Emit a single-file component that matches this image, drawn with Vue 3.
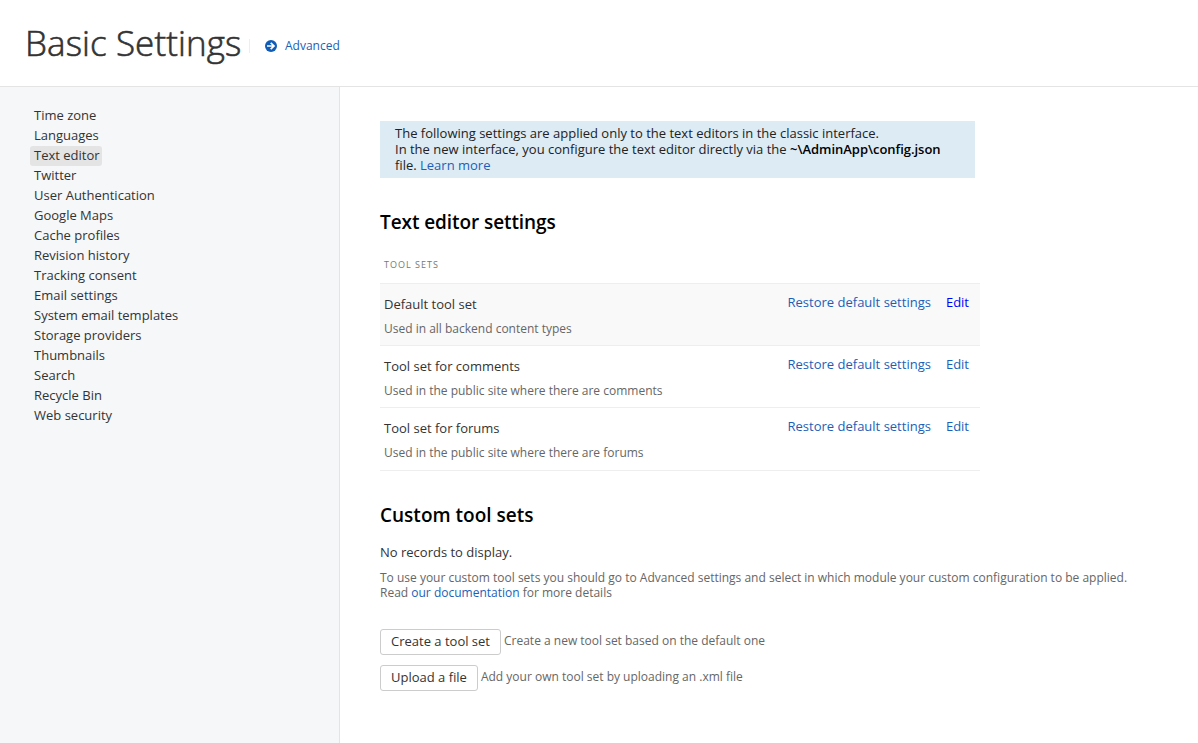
<script setup>
const nav = ['Time zone', 'Languages', 'Text editor', 'Twitter', 'User Authentication', 'Google Maps', 'Cache profiles', 'Revision history', 'Tracking consent', 'Email settings', 'System email templates', 'Storage providers', 'Thumbnails', 'Search', 'Recycle Bin', 'Web security']
const sets = [
  { name: 'Default tool set', note: 'Used in all backend content types', hot: true },
  { name: 'Tool set for comments', note: 'Used in the public site where there are comments' },
  { name: 'Tool set for forums', note: 'Used in the public site where there are forums' },
]
</script>

<template>
  <div class="page">
    <header class="head">
      <h1>Basic Settings</h1>
      <a class="adv">
        <svg width="12" height="12" viewBox="0 0 12 12"><circle cx="6" cy="6" r="6" fill="#105cb6" /><path d="M2 6H9M5.7 2.8L9 6L5.7 9.2" fill="none" stroke="#fff" stroke-width="1.7" /></svg>
        <span>Advanced</span>
      </a>
    </header>
    <div class="body">
      <nav class="side">
        <a v-for="n in nav" :key="n" :class="{ on: n === 'Text editor' }">{{ n }}</a>
      </nav>
      <main class="main">
        <div class="info">
          The following settings are applied only to the text editors in the classic interface.<br />
          In the new interface, you configure the text editor directly via the <b>~\AdminApp\config.json</b><br />
          file. <a>Learn more</a>
        </div>
        <h2>Text editor settings</h2>
        <div class="th">TOOL SETS</div>
        <div class="sets">
          <div v-for="s in sets" :key="s.name" class="row" :class="{ hot: s.hot }">
            <div class="desc"><div class="name">{{ s.name }}</div><div class="note">{{ s.note }}</div></div>
            <a class="restore">Restore default settings</a>
            <a class="edit">Edit</a>
          </div>
        </div>
        <h2 class="custom">Custom tool sets</h2>
        <p class="none">No records to display.</p>
        <p class="help">To use your custom tool sets you should go to Advanced settings and select in which module your custom configuration to be applied.<br />Read <a>our documentation</a> for more details</p>
        <div class="act"><button>Create a tool set</button><span>Create a new tool set based on the default one</span></div>
        <div class="act"><button>Upload a file</button><span>Add your own tool set by uploading an .xml file</span></div>
      </main>
    </div>
  </div>
</template>

<style>
body { margin: 0; background: #fff; }
</style>
<style scoped>
.page { height: 743px; overflow: hidden; display: flex; flex-direction: column; font: 13px/16px "Open Sans", sans-serif; color: #333; box-sizing: border-box; }
.page * { box-sizing: border-box; }
.head { height: 87px; flex: none; border-bottom: 1px solid #e4e4e4; display: flex; padding: 0 0 0 25px; }
h1 { margin: 19px 0 0; font-size: 35px; line-height: 48px; font-weight: 300; letter-spacing: 0.08px; -webkit-text-stroke: 0.6px #333; color: #333; width: 224px; white-space: nowrap; }
.adv { display: flex; align-items: center; gap: 8px; height: 14px; margin-top: 39px; padding-left: 15px; border-left: 1px solid #eee; font-size: 12px; }
a { color: #1b5fb8; }
.body { flex: 1; display: flex; min-height: 0; }
.side { width: 340px; background: #f5f7f9; border-right: 1px solid #e4e4e4; padding: 19px 0 0 30px; display: flex; flex-direction: column; align-items: flex-start; }
.side a { color: #333; height: 20px; line-height: 18px; padding: 0 2px 0 4px; border-radius: 3px; }
.side a.on { background: #e4e4e4; }
.main { flex: 1; padding: 34px 0 0 40px; }
.info { width: 595px; height: 57px; background: #ddebf4; padding: 4px 15px; color: #222; white-space: nowrap; }
.info b { font-weight: 600; letter-spacing: -0.03px; color: #000; }
h2 { margin: 31px 0 0; font-size: 19px; line-height: 26px; font-weight: 600; letter-spacing: -0.08px; color: #000; }
.th { margin: 22px 0 0 4px; font-size: 9px; line-height: 16px; letter-spacing: 1px; color: #777; }
.sets { width: 600px; margin-top: 10px; border-top: 1px solid #eee; }
.row { height: 62px; display: flex; border-bottom: 1px solid #eee; padding: 0 11px 0 4px; }
.row:last-child { height: 63px; }
.row.hot { background: #f9f9f9; }
.desc { flex: 1; }
.name { margin-top: 12px; }
.note { margin-top: 9px; font-size: 12px; line-height: 15px; color: #666; }
.restore, .edit { margin-top: 10px; }
.edit { margin-left: 15px; }
.hot .edit { color: #00f; }
.custom { margin-top: 31px; letter-spacing: 0; }
.none { margin: 16px 0 0; }
.help { margin: 10px 0 29px; font-size: 12px; line-height: 15px; color: #666; white-space: nowrap; }
.act { display: flex; margin-bottom: 10px; font-size: 12px; color: #666; }
.act span { margin: 4px 0 0 3px; }
button { height: 26px; padding: 0 10px 2px; font: 13px/16px "Open Sans", sans-serif; color: #333; background: #fff; border: 1px solid #ccc; border-radius: 3px; }
</style>
